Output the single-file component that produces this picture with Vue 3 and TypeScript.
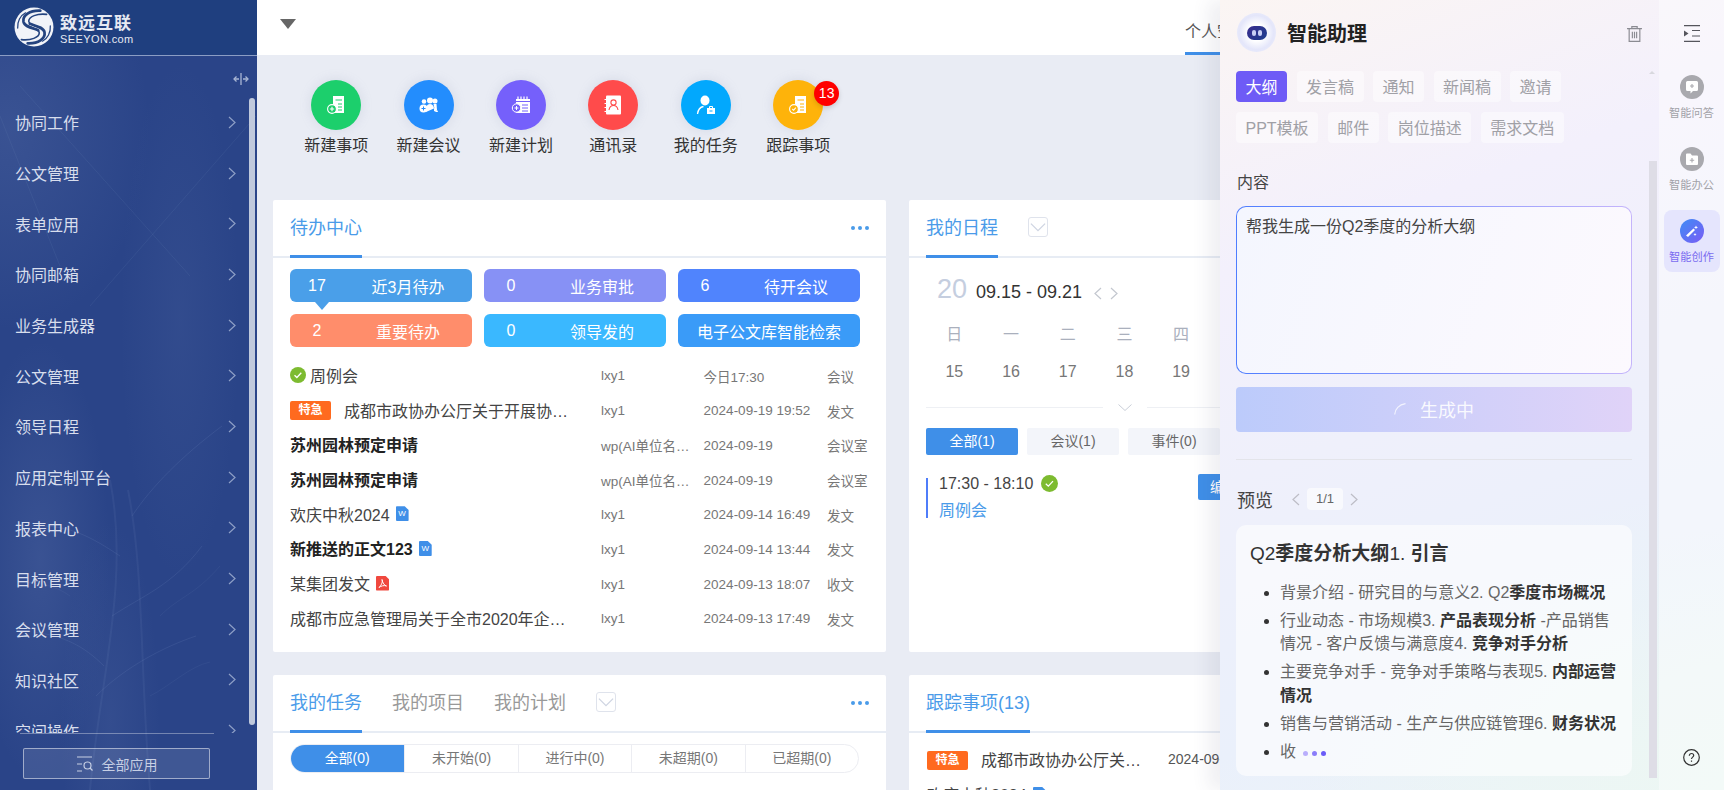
<script setup lang="ts">
interface Shortcut {
  label: string;
  tone: string;
  icon: string;
  badge?: number;
}

interface TodoRow {
  title: string;
  author: string;
  date: string;
  kind: string;
  bold?: boolean;
  urgent?: boolean;
  done?: boolean;
  file?: 'word' | 'pdf';
}

const menus: string[] = [
  '协同工作', '公文管理', '表单应用', '协同邮箱', '业务生成器', '公文管理', '领导日程',
  '应用定制平台', '报表中心', '目标管理', '会议管理', '知识社区', '空间操作',
];

const shortcuts: Shortcut[] = [
  { label: '新建事项', tone: 'green', icon: 'item' },
  { label: '新建会议', tone: 'blue', icon: 'meet' },
  { label: '新建计划', tone: 'violet', icon: 'plan' },
  { label: '通讯录', tone: 'red', icon: 'book' },
  { label: '我的任务', tone: 'sky', icon: 'task' },
  { label: '跟踪事项', tone: 'amber', icon: 'track', badge: 13 },
];

const tiles = [
  { num: '17', label: '近3月待办', tone: 't1', arrow: true },
  { num: '0', label: '业务审批', tone: 't2' },
  { num: '6', label: '待开会议', tone: 't3' },
  { num: '2', label: '重要待办', tone: 't4' },
  { num: '0', label: '领导发的', tone: 't5' },
  { num: '', label: '电子公文库智能检索', tone: 't6' },
];

const rows: TodoRow[] = [
  { title: '周例会', author: 'lxy1', date: '今日17:30', kind: '会议', done: true },
  { title: '成都市政协办公厅关于开展协…', author: 'lxy1', date: '2024-09-19 19:52', kind: '发文', urgent: true },
  { title: '苏州园林预定申请', author: 'wp(AI单位名…', date: '2024-09-19', kind: '会议室', bold: true },
  { title: '苏州园林预定申请', author: 'wp(AI单位名…', date: '2024-09-19', kind: '会议室', bold: true },
  { title: '欢庆中秋2024', author: 'lxy1', date: '2024-09-14 16:49', kind: '发文', file: 'word' },
  { title: '新推送的正文123', author: 'lxy1', date: '2024-09-14 13:44', kind: '发文', bold: true, file: 'word' },
  { title: '某集团发文', author: 'lxy1', date: '2024-09-13 18:07', kind: '收文', file: 'pdf' },
  { title: '成都市应急管理局关于全市2020年企…', author: 'lxy1', date: '2024-09-13 17:49', kind: '发文' },
];

const taskFilters = ['全部(0)', '未开始(0)', '进行中(0)', '未超期(0)', '已超期(0)'];
const weekDays = ['日', '一', '二', '三', '四', '五', '六'];
const weekNums = [15, 16, 17, 18, 19, 20, 21];
const scheduleFilters = ['全部(1)', '会议(1)', '事件(0)', '任务(0)'];
const writeTypes = ['大纲', '发言稿', '通知', '新闻稿', '邀请', 'PPT模板', '邮件', '岗位描述', '需求文档'];
</script>

<template>
  <div class="app">
    <aside class="side">
      <!-- faint tree texture behind the menu -->
      <svg class="side-art" viewBox="0 0 256 734" width="256" height="734" fill="none" stroke="#8ea2cf">
        <path d="M0 60 60 210M20 30l170 190M256 60 90 250" stroke-opacity=".1" />
        <path d="M150 734c-10-120-6-220-22-300M90 734c10-110 40-210 20-310" stroke-opacity=".09" stroke-width="2" />
        <path d="M112 560c30-20 60-30 90-70M120 500c-30-20-50-30-80-30M96 640c30-30 70-50 100-60M104 610c-20-20-40-30-70-34M132 460c20-30 50-60 90-90" stroke-opacity=".13" />
        <path d="M150 640c20-10 40-30 60-34M160 560c20-20 34-20 60-50M70 540c-14-10-30-14-50-14" stroke-opacity=".08" />
      </svg>
      <div class="logo">
        <svg class="logo-mark" viewBox="0 0 38 38" width="40" height="40">
          <circle cx="19" cy="19" r="18.5" fill="#f1f3f8" />
          <g fill="none" stroke="#24437f" stroke-linecap="round">
            <path d="M25 3.500C15 3 8 8 9 14c1 5 9 6 14 8" stroke-width="2.600" />
            <path d="M31 7C22 6 14 9 14 13.500c0 3 6 4.500 11 6" stroke-width="1.500" />
            <path d="M13 34.500c10 .5 17-4.500 16-10.500-1-5-9-6-14-8" stroke-width="2.600" />
            <path d="M7 31c9 1 17-2 17-6.500 0-3-6-4.500-11-6.500" stroke-width="1.500" />
            <path d="M3.500 20C3 14 6 8 11 5.500" stroke-width="1.200" />
            <path d="M34.500 18c.5 6-2.500 12-7.500 14.500" stroke-width="1.200" />
          </g>
        </svg>
        <div class="logo-text">
          <span class="logo-cn">致远互联</span>
          <span class="logo-en">SEEYON.com</span>
        </div>
      </div>
      <div class="side-tool">
        <svg viewBox="0 0 16 12" width="16" height="12" fill="none" stroke="#a9b6d4" stroke-width="1.300">
          <path d="M8 0v12M1 6h5M10 6h5" />
          <path d="M3.500 3.500 1 6l2.500 2.500M12.500 3.500 15 6l-2.500 2.500" />
        </svg>
      </div>
      <nav class="menu">
        <a v-for="(m, i) in menus" :key="i" class="menu-item">
          <span>{{ m }}</span>
          <svg viewBox="0 0 8 13" width="8" height="13" fill="none" stroke="#8e9fc6" stroke-width="1.200">
            <path d="M1 1l6 5.500L1 12" />
          </svg>
        </a>
      </nav>
      <div class="side-foot">
        <button class="all-apps" type="button">
          <svg viewBox="0 0 17 16" width="17" height="16" fill="none" stroke="#c7cfe4" stroke-width="1.200">
            <path d="M1 1h15M1 8h5M1 15h5" />
            <circle cx="11.500" cy="9.500" r="3.500" />
            <path d="M14 12l2.500 2.500" />
          </svg>
          全部应用
        </button>
      </div>
      <div class="side-scroll"></div>
    </aside>

    <main class="main">
      <header class="topbar">
        <span class="caret"></span>
        <span class="space-tab">个人空间</span>
      </header>

      <div class="content">
        <section class="shortcuts">
          <div v-for="s in shortcuts" :key="s.label" class="shortcut">
            <div class="bubble" :class="s.tone">
              <svg viewBox="0 0 24 24" width="24" height="24">
                <template v-if="s.icon === 'item' || s.icon === 'track'">
                  <path d="M9 3h11v17H9z" fill="#fff" />
                  <path d="M11.500 7H18M14 11h4M14 14h4M14 17h4" stroke="currentColor" stroke-width="1" />
                  <circle cx="8" cy="16" r="4.400" fill="currentColor" stroke="#fff" stroke-width="1.100" />
                  <path v-if="s.icon === 'item'" d="M8 13.800v4.400M5.800 16h4.400" stroke="#fff" stroke-width="1.100" />
                  <path v-else d="M6.300 16l1.300 1.300 2.200-2.600" fill="none" stroke="#fff" stroke-width="1.100" />
                </template>
                <template v-else-if="s.icon === 'meet'">
                  <circle cx="13" cy="7.500" r="3" fill="#fff" />
                  <path d="M9 19c-.5-5 1-8 4-8s4.500 3 4 7c1.500 1 3 1 4 1l-.5-1.500c-1.500 0-2-1-2.500-2.500" fill="#fff" />
                  <circle cx="18" cy="8" r="2.500" fill="#fff" />
                  <path d="M16.500 11h3l.5 6-2 1z" fill="#fff" />
                  <circle cx="7" cy="8.500" r="2.300" fill="#fff" />
                  <circle cx="6.500" cy="15.500" r="4" fill="#fff" />
                  <path d="M6.500 13.500v4M4.500 15.500h4" stroke="currentColor" stroke-width="1" />
                </template>
                <template v-else-if="s.icon === 'plan'">
                  <path d="M7 6h14v14H7z" fill="#fff" />
                  <path d="M9 3.500v3M12 3.500v3M15 3.500v3M18 3.500v3" stroke="#fff" stroke-width="1.200" />
                  <path d="M7 8.500h14M13 12h6M13 15h6M13 18h6" stroke="currentColor" stroke-width="1" />
                  <circle cx="7.500" cy="15" r="4.200" fill="currentColor" stroke="#fff" stroke-width="1" />
                  <path d="M7.500 13v4M5.500 15h4" stroke="#fff" stroke-width="1" />
                </template>
                <template v-else-if="s.icon === 'book'">
                  <rect x="5" y="2.500" width="15" height="19" rx="1" fill="#fff" />
                  <path d="M3.500 6.500h3M3.500 10.500h3M3.500 14.500h3M3.500 18.500h3" stroke="#fff" stroke-width="1.200" />
                  <circle cx="12.500" cy="9.500" r="2.600" fill="none" stroke="currentColor" stroke-width="1.100" />
                  <path d="M8 17c.5-3 2.500-4.500 4.500-4.500S16.500 14 17 17" fill="none" stroke="currentColor" stroke-width="1.100" />
                </template>
                <template v-else>
                  <ellipse cx="11" cy="7.500" rx="4.500" ry="5" fill="#fff" />
                  <path d="M3.500 21c.5-4 3-7 6-7.500" fill="none" stroke="#fff" stroke-width="1.300" />
                  <path d="M13 15h8v6h-8z" fill="#fff" />
                  <path d="M15.500 15v-1.500h3V15" fill="none" stroke="#fff" stroke-width="1" />
                  <path d="M15.500 18h3" stroke="currentColor" stroke-width="1" />
                </template>
              </svg>
              <span v-if="s.badge" class="bubble-badge">{{ s.badge }}</span>
            </div>
            <span class="shortcut-label">{{ s.label }}</span>
          </div>
        </section>

        <div class="board">
          <section class="card">
            <div class="card-head">
              <span class="tab active">待办中心</span>
              <span class="more"><i></i><i></i><i></i></span>
            </div>
            <div class="tiles">
              <div v-for="t in tiles" :key="t.label" class="tile" :class="[t.tone, { solo: !t.num }]">
                <span v-if="t.num" class="tile-num">{{ t.num }}</span>
                <span class="tile-label">{{ t.label }}</span>
                <i v-if="t.arrow" class="tile-arrow"></i>
              </div>
            </div>
            <div class="todo">
              <div v-for="(r, i) in rows" :key="i" class="todo-row">
                <div class="todo-title" :class="{ strong: r.bold }">
                  <svg v-if="r.done" class="check" viewBox="0 0 16 16" width="16" height="16">
                    <circle cx="8" cy="8" r="8" fill="#7dbb30" />
                    <path d="M4.500 8.200l2.400 2.300 4.400-4.700" fill="none" stroke="#fff" stroke-width="1.300" />
                  </svg>
                  <span v-if="r.urgent" class="urgent">特急</span>
                  <span class="todo-text">{{ r.title }}</span>
                  <span v-if="r.file === 'word'" class="file word">W</span>
                  <span v-else-if="r.file === 'pdf'" class="file pdf">
                    <svg viewBox="0 0 13 15" width="13" height="15" fill="none" stroke="#fff" stroke-width="1">
                      <path d="M6 3.500c1 3-1 6-3 8 2-1.500 5-2.500 7.500-1.500C8.500 9.500 6.500 7 6 3.500z" />
                    </svg>
                  </span>
                </div>
                <span class="todo-author">{{ r.author }}</span>
                <span class="todo-cell">{{ r.date }}</span>
                <span class="todo-cell">{{ r.kind }}</span>
              </div>
            </div>
          </section>

          <section class="card">
            <div class="card-head">
              <span class="tab active">我的日程</span>
              <span class="fold">
                <svg viewBox="0 0 12 7" width="16" height="9" fill="none" stroke="#cfd5e2" stroke-width="1">
                  <path d="M.5.500 6 6l5.500-5.500" />
                </svg>
              </span>
            </div>
            <div class="week">
              <div class="week-head">
                <span class="week-day">20</span>
                <span class="week-range">09.15 - 09.21</span>
                <svg viewBox="0 0 8 13" width="8" height="13" fill="none" stroke="#c3c7cf" stroke-width="1.200">
                  <path d="M7 1 1 6.500 7 12" />
                </svg>
                <svg viewBox="0 0 8 13" width="8" height="13" fill="none" stroke="#c3c7cf" stroke-width="1.200">
                  <path d="M1 1l6 5.500L1 12" />
                </svg>
              </div>
              <div class="week-grid">
                <span v-for="d in weekDays" :key="d" class="wd">{{ d }}</span>
                <span v-for="n in weekNums" :key="n" class="wn">{{ n }}</span>
              </div>
              <div class="week-fold">
                <i></i>
                <svg viewBox="0 0 14 7" width="14" height="7" fill="none" stroke="#c9ced8" stroke-width="1">
                  <path d="M.5.500 7 6.500l6.500-6" />
                </svg>
                <i></i>
              </div>
              <div class="filters">
                <span v-for="(f, i) in scheduleFilters" :key="f" class="filter" :class="{ on: i === 0 }">{{ f }}</span>
              </div>
              <div class="event">
                <div class="event-info">
                  <div class="event-time">
                    17:30 - 18:10
                    <svg viewBox="0 0 16 16" width="17" height="17">
                      <circle cx="8" cy="8" r="8" fill="#7dbb30" />
                      <path d="M4.500 8.200l2.400 2.300 4.400-4.700" fill="none" stroke="#fff" stroke-width="1.200" />
                    </svg>
                  </div>
                  <div class="event-name">周例会</div>
                </div>
                <span class="event-btn">编辑</span>
              </div>
            </div>
          </section>

          <section class="card">
            <div class="card-head">
              <span class="tab active">我的任务</span>
              <span class="tab">我的项目</span>
              <span class="tab">我的计划</span>
              <span class="fold">
                <svg viewBox="0 0 12 7" width="16" height="9" fill="none" stroke="#cfd5e2" stroke-width="1">
                  <path d="M.5.500 6 6l5.500-5.500" />
                </svg>
              </span>
              <span class="more"><i></i><i></i><i></i></span>
            </div>
            <div class="segments">
              <span v-for="(f, i) in taskFilters" :key="f" class="segment" :class="{ on: i === 0 }">{{ f }}</span>
            </div>
          </section>

          <section class="card">
            <div class="card-head">
              <span class="tab active">跟踪事项(13)</span>
            </div>
            <div class="track">
              <div class="track-row">
                <span class="urgent">特急</span>
                <span class="track-title">成都市政协办公厅关…</span>
                <span class="track-date">2024-09-19 19:52</span>
              </div>
              <div class="track-row">
                <span>欢庆中秋2024</span>
                <span class="file word">W</span>
              </div>
            </div>
          </section>
        </div>
      </div>
    </main>

    <section class="panel">
      <div class="assistant">
        <header class="as-head">
          <div class="bot">
            <div class="bot-face"><i></i><i></i></div>
          </div>
          <h1>智能助理</h1>
          <svg class="trash" viewBox="0 0 14 15" width="15" height="16" fill="none" stroke="#8b8b92" stroke-width="1.100">
            <path d="M0 2.500h14M4.500 2.500V.6h5v1.900M2 2.500V14.400h10V2.500M5 5.500v6M7 5.500v6M9 5.500v6" />
          </svg>
        </header>
        <div class="types">
          <span v-for="(t, i) in writeTypes" :key="t" class="type" :class="{ on: i === 0 }">{{ t }}</span>
        </div>
        <div class="field-label">内容</div>
        <div class="prompt">帮我生成一份Q2季度的分析大纲</div>
        <button class="gen" type="button">
          <svg viewBox="0 0 12 12" width="12" height="12" fill="none" stroke="#fff" stroke-opacity=".75" stroke-width="1.200">
            <path d="M.7 11.500C1 6 5 1.500 11.500.7" />
          </svg>
          生成中
        </button>
        <div class="split"></div>
        <div class="preview-head">
          <span class="preview-title">预览</span>
          <svg viewBox="0 0 8 13" width="8" height="13" fill="none" stroke="#bdbdc6" stroke-width="1.200">
            <path d="M7 1 1 6.500 7 12" />
          </svg>
          <span class="pager">1/1</span>
          <svg viewBox="0 0 8 13" width="8" height="13" fill="none" stroke="#bdbdc6" stroke-width="1.200">
            <path d="M1 1l6 5.500L1 12" />
          </svg>
        </div>
        <article class="preview">
          <h2>Q2<b>季度分析大纲</b>1. <b>引言</b></h2>
          <ul>
            <li>背景介绍 - 研究目的与意义2. Q2<b>季度市场概况</b></li>
            <li>行业动态 - 市场规模3. <b>产品表现分析</b> -产品销售情况 - 客户反馈与满意度4. <b>竞争对手分析</b></li>
            <li>主要竞争对手 - 竞争对手策略与表现5. <b>内部运营情况</b></li>
            <li>销售与营销活动 - 生产与供应链管理6. <b>财务状况</b></li>
            <li>收<span class="typing"><i></i><i></i><i></i></span></li>
          </ul>
        </article>
        <i class="as-arrow"></i>
        <div class="as-scroll"></div>
      </div>

      <div class="rail">
        <svg class="rail-fold" viewBox="0 0 18 17" width="18" height="17" fill="none" stroke="#55555c" stroke-width="1.200">
          <path d="M1 .6h16M9 5.500h8M9 11h8M1 16.400h16" />
          <path d="M1 5.500 5.500 8.500 1 11.500z" fill="#55555c" stroke="none" />
        </svg>
        <div class="rail-item">
          <span class="rail-dot">
            <svg viewBox="0 0 14 14" width="14" height="14">
              <path d="M2.500 1h9A1.500 1.500 0 0 1 13 2.500v7A1.500 1.500 0 0 1 11.500 11H8l-2.500 2.500V11h-3A1.500 1.500 0 0 1 1 9.500v-7A1.500 1.500 0 0 1 2.500 1z" fill="#fff" />
              <path d="M7 4v4M5 6h4" stroke="#a9a9ae" stroke-width="1.100" />
            </svg>
          </span>
          <span>智能问答</span>
        </div>
        <div class="rail-item">
          <span class="rail-dot">
            <svg viewBox="0 0 14 14" width="14" height="14">
              <path d="M1 2.500A1 1 0 0 1 2 1.500h3.500L7 3.500h5a1 1 0 0 1 1 1V12a1 1 0 0 1-1 1H2a1 1 0 0 1-1-1z" fill="#fff" />
              <path d="M7 6v4.500M4.800 8.200h4.400" stroke="#a9a9ae" stroke-width="1.100" />
            </svg>
          </span>
          <span>智能办公</span>
        </div>
        <div class="rail-item active">
          <span class="rail-dot">
            <svg viewBox="0 0 14 14" width="14" height="14" fill="#fff">
              <path d="M1 11.500 8.500 4.500l1.500 1.500L3 13z" />
              <path d="M11 1.500l.6 1.300 1.400.6-1.400.6-.6 1.300-.6-1.300-1.400-.6 1.400-.6zM10 9l.5 1 1 .5-1 .5-.5 1-.5-1-1-.5 1-.5z" />
            </svg>
          </span>
          <span>智能创作</span>
        </div>
        <svg class="rail-help" viewBox="0 0 17 17" width="17" height="17" fill="none" stroke="#333" stroke-width="1.200">
          <circle cx="8.500" cy="8.500" r="7.800" />
          <path d="M6.300 6.700c0-1.300 1-2.200 2.200-2.200s2.200.9 2.200 2c0 1.600-2.200 1.700-2.200 3.500" />
          <path d="M8.500 11.500v1.300" />
        </svg>
      </div>
    </section>
  </div>
</template>

<style>
html,
body {
  margin: 0;
  overflow: hidden;
}
</style>

<style scoped>
.app {
  position: relative;
  display: flex;
  width: 1724px;
  height: 790px;
  overflow: hidden;
  background: #e9ecf4;
  color: #444;
  font-family: "Liberation Sans", "Noto Sans CJK SC", sans-serif;
  font-size: 16px;
}

/* Sidebar */
.side {
  position: relative;
  isolation: isolate;
  flex: 0 0 256px;
  display: flex;
  flex-direction: column;
  background:
    radial-gradient(ellipse 70px 220px at 40px 560px, rgba(120, 140, 190, 0.2), transparent),
    radial-gradient(ellipse 50px 200px at 110px 720px, rgba(120, 140, 190, 0.12), transparent),
    radial-gradient(ellipse 140px 200px at 10px 130px, rgba(120, 140, 190, 0.2), transparent),
    radial-gradient(ellipse 60px 260px at 180px 320px, rgba(120, 140, 190, 0.1), transparent),
    #2a4488;
}

.side-art {
  position: absolute;
  left: 0;
  top: 56px;
  z-index: -1;
}

.logo {
  display: flex;
  align-items: center;
  gap: 6px;
  box-sizing: border-box;
  width: 257px;
  height: 56px;
  padding: 0 0 1px 14px;
  background: #1f3f7f;
  border-bottom: 1px solid #8b9dc4;
}

.logo-text {
  display: flex;
  flex-direction: column;
  color: #e6eaf3;
}

.logo-cn {
  font-family: "Noto Sans CJK SC", sans-serif;
  font-size: 17px;
  font-weight: 700;
  letter-spacing: 1px;
  line-height: 23px;
}

.logo-en {
  font-size: 11px;
  line-height: 12px;
  letter-spacing: 0.4px;
}

.side-tool {
  display: flex;
  justify-content: flex-end;
  align-items: center;
  box-sizing: border-box;
  height: 41px;
  padding: 4px 8px 0 0;
  flex: none;
}

.menu {
  flex: 1;
  min-height: 0;
  overflow: hidden;
}

.menu-item {
  display: flex;
  align-items: center;
  justify-content: space-between;
  height: 50.7px;
  padding: 0 21px 0 15px;
  color: #d8deed;
}

.side-foot {
  flex: none;
  height: 57px;
  position: relative;
  padding: 15px 0 0 23px;
  box-sizing: border-box;
}

.side-foot::before {
  content: "";
  position: absolute;
  left: 20px;
  top: 0;
  width: 194px;
  height: 1px;
  background: rgba(255, 255, 255, 0.35);
}

.all-apps {
  display: flex;
  align-items: center;
  justify-content: center;
  gap: 9px;
  width: 187px;
  height: 31px;
  padding: 0;
  background: rgba(255, 255, 255, 0.1);
  border: 1px solid rgba(255, 255, 255, 0.5);
  border-radius: 2px;
  color: #c7cfe4;
  font: inherit;
  font-size: 14px;
}

.side-scroll {
  position: absolute;
  left: 249px;
  top: 98px;
  width: 6px;
  height: 627px;
  border-radius: 3px;
  background: #c0c9dc;
}

/* Main */
.main {
  flex: 1;
  min-width: 0;
  display: flex;
  flex-direction: column;
}

.topbar {
  flex: none;
  display: flex;
  justify-content: space-between;
  height: 55px;
  padding: 0 471px 0 23px;
  background: #fff;
}

.caret {
  width: 0;
  height: 0;
  margin-top: 19px;
  border-left: 8px solid transparent;
  border-right: 8px solid transparent;
  border-top: 10px solid #666;
}

.space-tab {
  box-sizing: border-box;
  height: 55px;
  width: 68px;
  padding-top: 21px;
  line-height: 22px;
  border-bottom: 3px solid #3f8fe8;
  color: #555;
}

.content {
  flex: 1;
  min-height: 0;
  padding: 0 0 0 16px;
}

.shortcuts {
  display: flex;
  box-sizing: border-box;
  height: 145px;
  padding: 25px 0 0 17px;
}

.shortcut {
  width: 92.4px;
  display: flex;
  flex-direction: column;
  align-items: center;
  gap: 6px;
}

.bubble {
  position: relative;
  display: flex;
  align-items: center;
  justify-content: center;
  width: 50px;
  height: 50px;
  border-radius: 50%;
  box-shadow: 0 0 12px rgba(140, 150, 180, 0.22);
}

.green { background: #1ccf6c; color: #1ccf6c; }
.blue { background: #238dfd; color: #238dfd; }
.violet { background: #7560fb; color: #7560fb; }
.red { background: #ff4b4b; color: #ff4b4b; }
.sky { background: #02a8fd; color: #02a8fd; }
.amber { background: #feb30a; color: #feb30a; }

.bubble-badge {
  position: absolute;
  top: 1px;
  left: 41px;
  width: 25px;
  height: 25px;
  border-radius: 50%;
  background: #f00;
  color: #fff;
  font-size: 14px;
  line-height: 25px;
  text-align: center;
  box-shadow: 0 2px 5px rgba(0, 0, 0, 0.15);
}

.shortcut-label {
  line-height: 20px;
  color: #333;
}

.board {
  display: grid;
  grid-template-columns: 613px 613px;
  grid-template-rows: 452px 300px;
  gap: 23px;
}

.card {
  background: #fff;
  border-radius: 2px;
}

.card-head {
  display: flex;
  align-items: stretch;
  box-sizing: border-box;
  height: 58px;
  padding: 0 17px;
  gap: 30px;
  border-bottom: 2px solid #e7ecf4;
}

.tab {
  box-sizing: border-box;
  height: 58px;
  padding-top: 16px;
  font-size: 18px;
  line-height: 24px;
  color: #999;
}

.tab.active {
  color: #4a9be9;
  border-bottom: 3px solid #3f8fe8;
}

.fold {
  display: flex;
  align-items: center;
  justify-content: center;
  box-sizing: border-box;
  align-self: center;
  width: 20px;
  height: 20px;
  margin-top: -2px;
  border: 1px solid #dfe3ec;
  border-radius: 3px;
}

.more {
  display: flex;
  gap: 2.500px;
  align-items: center;
  margin-left: auto;
}

.more i {
  width: 4.500px;
  height: 4.500px;
  border-radius: 50%;
  background: #4a9be9;
}

.tiles {
  display: grid;
  grid-template-columns: repeat(3, 182px);
  gap: 12px;
  padding: 11px 17px 0;
}

.tile {
  position: relative;
  display: grid;
  grid-template-columns: 54px 1fr;
  align-items: center;
  height: 33px;
  border-radius: 6px;
  color: #fff;
  text-align: center;
}

.tile.solo {
  grid-template-columns: 1fr;
}

.tile-label {
  padding-right: 0;
}

.tile-arrow {
  position: absolute;
  left: 25px;
  top: 33px;
  width: 0;
  height: 0;
  border-left: 7px solid transparent;
  border-right: 7px solid transparent;
  border-top: 8px solid #4a9fe9;
}

.t1 { background: #4a9fe9; }
.t2 { background: #8791f5; }
.t3 { background: #5084fd; }
.t4 { background: #ff8d6b; }
.t5 { background: #3ab8ff; }
.t6 { background: #3a9bf8; }

.todo {
  margin-top: 10.600px;
}

.todo-row {
  display: grid;
  grid-template-columns: 311px 102.600px 123.400px 1fr;
  align-items: center;
  height: 34.700px;
  padding-left: 17px;
  color: #777;
  font-size: 13.500px;
}

.todo-title {
  display: flex;
  align-items: center;
  min-width: 0;
  font-size: 16px;
  color: #444;
}

.todo-title.strong {
  color: #222;
  font-weight: 700;
}

.todo-text {
  white-space: nowrap;
}

.todo-author {
  white-space: nowrap;
  padding-top: 2px;
}

.todo-cell {
  padding-top: 2px;
}

.check {
  flex: none;
  margin-right: 4px;
}

.urgent {
  flex: none;
  width: 41px;
  height: 19px;
  margin: 2px 13px 0 0;
  border-radius: 2px;
  background: #ff6a1f;
  color: #fff;
  font-size: 12px;
  font-weight: 700;
  line-height: 19px;
  text-align: center;
}

.file {
  flex: none;
  display: flex;
  width: 13px;
  height: 15px;
  margin-left: 6px;
  justify-content: center;
  clip-path: polygon(0 0, 70% 0, 100% 25%, 100% 100%, 0 100%);
  border-radius: 1px;
  color: #fff;
  font-size: 8px;
  font-weight: 400;
  line-height: 16px;
}

.file.word { background: #3f8fe8; }
.file.pdf { background: #f0483e; }

.week {
  padding: 19px 0 0 17px;
}

.week-head {
  display: flex;
  align-items: center;
  height: 30px;
  padding-left: 11px;
}

.week-day {
  width: 39px;
  font-size: 27px;
  color: #c5cedf;
  margin-top: -5px;
}

.week-range {
  width: 118px;
  font-size: 18px;
  color: #333;
}

.week-head svg {
  margin-right: 8px;
  margin-top: 2px;
}

.week-grid {
  display: grid;
  grid-template-columns: repeat(7, 56.700px);
  grid-auto-rows: 39px;
  align-items: center;
  margin-top: 6.500px;
  text-align: center;
}

.wd { color: #aab0bd; }
.wn { color: #777; }

.week-fold {
  display: flex;
  align-items: center;
  width: 397px;
  height: 14px;
  margin-top: 9px;
}

.week-fold i {
  flex: 1;
  height: 1px;
  background: #eef0f4;
}

.week-fold svg {
  margin: 0 15px;
}

.filters {
  display: flex;
  gap: 9px;
  margin-top: 13px;
}

.filter {
  width: 92px;
  height: 27px;
  border-radius: 2px;
  background: #f3f5fa;
  color: #666;
  font-size: 14px;
  line-height: 27px;
  text-align: center;
}

.filter.on {
  background: #3f8fe8;
  color: #fff;
}

.event {
  display: flex;
  align-items: flex-start;
  margin-top: 19px;
}

.event-info {
  box-sizing: border-box;
  width: 272px;
  margin-top: 4px;
  height: 40px;
  padding-left: 11px;
  border-left: 2px solid #4f7dfa;
}

.event-time {
  display: flex;
  align-items: center;
  gap: 8px;
  height: 12px;
  color: #444;
}

.event-name {
  margin-top: 9px;
  line-height: 30px;
  color: #4a9be9;
  transform: translateY(-3px);
}

.event-btn {
  width: 52px;
  height: 26px;
  border-radius: 2px;
  background: #3f8fe8;
  color: #fff;
  font-size: 14px;
  line-height: 26px;
  text-align: center;
}

.segments {
  display: grid;
  grid-template-columns: repeat(5, 1fr);
  box-sizing: border-box;
  width: 569px;
  height: 29px;
  margin: 11px 0 0 17px;
  border: 1px solid #ecedf2;
  border-radius: 15px;
  overflow: hidden;
  font-size: 14px;
}

.segment {
  line-height: 27px;
  text-align: center;
  color: #777;
  border-left: 1px solid #ecedf2;
}

.segment.on {
  margin: -1px 0 -1px -1px;
  background: #3f8fe8;
  border-left: 0;
  line-height: 29px;
  color: #fff;
}

.track {
  padding: 9px 0 0 18px;
}

.track-row {
  display: flex;
  align-items: center;
  height: 34.700px;
}

.track-title {
  width: 165px;
  margin-right: 22px;
  white-space: nowrap;
}

.track-date {
  font-size: 14px;
  color: #555;
}

/* Assistant panel */
.panel {
  position: absolute;
  top: 0;
  right: 0;
  display: flex;
  width: 504px;
  height: 790px;
  background:
    radial-gradient(ellipse 420px 300px at 100% 100%, #ecf7f3, transparent),
    linear-gradient(160deg, #fbf5f3 0%, #f3f0fc 28%, #eff0fb 50%, #eaf0fb 78%, #edf5f6 100%);
  box-shadow: -12px 0 16px rgba(60, 70, 100, 0.08);
}

.assistant {
  position: relative;
  flex: 0 0 439px;
  box-sizing: border-box;
  padding: 0 27px 0 16px;
}

.as-head {
  display: flex;
  align-items: center;
  height: 65px;
  margin: 0 -10px 6px 1px;
}

.as-head h1 {
  margin: 0 0 0 11px;
  font-size: 20px;
  font-weight: 700;
  color: #222;
}

.trash {
  margin-left: auto;
  margin-top: 2px;
}

.bot {
  display: flex;
  align-items: center;
  justify-content: center;
  width: 39px;
  height: 39px;
  border-radius: 50%;
  background: radial-gradient(circle, #fff 30%, #e4e6fa 62%, #f0f2fc 100%);
}

.bot-face {
  display: flex;
  align-items: center;
  justify-content: center;
  gap: 2px;
  width: 20px;
  height: 14px;
  border-radius: 7px;
  background: linear-gradient(135deg, #3a2c8e, #1d3f8f);
}

.bot-face i {
  width: 4px;
  height: 6px;
  border-radius: 2px;
  background: #c9d0f5;
}

.types {
  display: flex;
  flex-wrap: wrap;
  gap: 10px 9.500px;
}

.type {
  box-sizing: border-box;
  height: 31px;
  padding: 0 9.500px;
  border-radius: 4px;
  background: rgba(255, 255, 255, 0.45);
  color: #a0a0a6;
  line-height: 33px;
}

.type.on {
  background: #6e5bf6;
  color: #fff;
}

.field-label {
  margin-top: 27.500px;
  padding-left: 1px;
  line-height: 24px;
  color: #444;
}

.prompt {
  box-sizing: border-box;
  height: 168px;
  margin-top: 11px;
  padding: 9px 9px;
  border: 1.500px solid transparent;
  border-radius: 10px;
  background:
    linear-gradient(110deg, #f4f6fe, #fcf9fe) padding-box,
    linear-gradient(90deg, #4f7dff, #c5b5fb) border-box;
  color: #444;
  font-size: 16px;
  line-height: 22px;
}

.gen {
  display: flex;
  align-items: center;
  justify-content: center;
  gap: 14px;
  width: 100%;
  height: 45px;
  margin-top: 13px;
  padding: 0;
  border: 0;
  border-radius: 4px;
  background: linear-gradient(90deg, #bccbfb, #e0d3f8);
  color: rgba(255, 255, 255, 0.9);
  font: inherit;
  font-size: 18px;
}

.split {
  height: 1px;
  margin-top: 27px;
  background: #e3e4ea;
}

.preview-head {
  display: flex;
  align-items: center;
  height: 23px;
  margin-top: 28px;
}

.preview-title {
  width: 55px;
  padding-left: 1px;
  font-size: 18px;
  color: #444;
}

.pager {
  width: 36px;
  height: 22px;
  margin: 0 7px;
  border-radius: 4px;
  background: rgba(255, 255, 255, 0.6);
  color: #666;
  font-size: 13px;
  line-height: 22px;
  text-align: center;
}

.preview {
  box-sizing: border-box;
  height: 251px;
  margin-top: 14px;
  padding: 15px 14px 0 14px;
  border-radius: 10px;
  background: rgba(255, 255, 255, 0.6);
}

.preview h2 {
  margin: 0;
  font-size: 19px;
  font-weight: 400;
  line-height: 28px;
  color: #333;
}

.preview ul {
  margin: 13px 0 0;
  padding-left: 30px;
  color: #666;
  line-height: 23.500px;
}

.preview li {
  margin-bottom: 4.500px;
}

.preview li::marker {
  color: #333;
}

.preview b {
  color: #333;
}

.typing {
  display: inline-flex;
  gap: 4px;
  margin-left: 7px;
  vertical-align: 1px;
}

.typing i {
  width: 5px;
  height: 5px;
  border-radius: 50%;
  background: #6a5cf8;
}

.typing i:first-child { background: #b9aefc; }
.typing i:nth-child(2) { background: #8a7dfa; }

.as-arrow {
  position: absolute;
  left: 429px;
  top: 71px;
  width: 0;
  height: 0;
  border-left: 3px solid transparent;
  border-right: 3px solid transparent;
  border-bottom: 3px solid #d8d8de;
}

.as-scroll {
  position: absolute;
  left: 429px;
  top: 161px;
  width: 8px;
  height: 617px;
  background: #dedde6;
}

.rail {
  flex: 1;
  display: flex;
  flex-direction: column;
  align-items: center;
  gap: 10px;
  background: rgba(255, 255, 255, 0.4);
  padding-bottom: 24px;
  box-sizing: border-box;
}

.rail-fold {
  margin: 25px 0 14px;
}

.rail-item {
  box-sizing: border-box;
  display: flex;
  flex-direction: column;
  align-items: center;
  width: 56px;
  height: 62px;
  padding-top: 9px;
  border-radius: 8px;
  color: #a2a2a8;
  font-size: 11.200px;
  line-height: 14px;
}

.rail-item.active {
  background: #e5e5fd;
  color: #7a6cf0;
}

.rail-dot {
  display: flex;
  align-items: center;
  justify-content: center;
  width: 24px;
  height: 24px;
  margin-bottom: 7px;
  border-radius: 50%;
  background: #a9a9ae;
}

.active .rail-dot {
  background: linear-gradient(135deg, #3f8cf5, #7a5cf5);
}

.rail-help {
  margin-top: auto;
}
</style>
